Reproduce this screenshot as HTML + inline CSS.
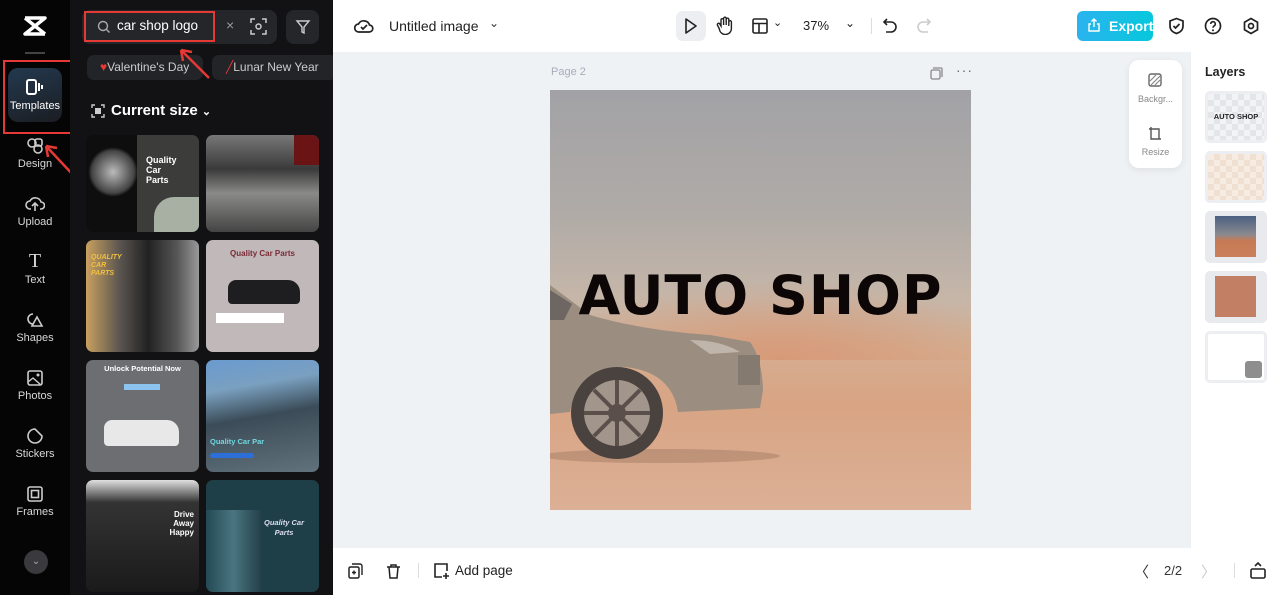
<!DOCTYPE html>
<html><head><meta charset="utf-8"><style>
*{margin:0;padding:0;box-sizing:border-box}
body{width:1280px;height:595px;overflow:hidden;font-family:"Liberation Sans",sans-serif;background:#fff;position:relative}
.abs{position:absolute}
.nav{left:0;top:0;width:70px;height:595px;background:#050505}
.navi{position:absolute;left:0;width:70px;text-align:center;color:#d8d8d8;font-size:11px}
.panel{left:70px;top:0;width:263px;height:595px;background:#121214;overflow:hidden}
.th{position:absolute;width:113px;border-radius:7px;overflow:hidden}
.canvasbg{left:333px;top:52px;width:857px;height:496px;background:#eff2f5}
.icon{position:absolute}
</style></head><body>
<div class="abs nav">
  <svg class="icon" style="left:22px;top:14px" width="26" height="24" viewBox="0 0 26 24"><path d="M3 4h20L3 20h20M3 4l20 16" stroke="#fff" stroke-width="3.5" fill="none" stroke-linejoin="round"/></svg>
  <div class="abs" style="left:25px;top:52px;width:20px;height:2px;background:#444"></div>
  <div class="abs" style="left:3px;top:60px;width:73px;height:74px;border:2px solid #e53935"></div>
  <div class="abs" style="left:8px;top:68px;width:54px;height:54px;border-radius:10px;background:linear-gradient(160deg,#23394f,#1b1d22)"></div>
  <svg class="icon" style="left:25px;top:78px" width="20" height="18" viewBox="0 0 20 18"><rect x="2" y="2" width="9" height="14" rx="2" stroke="#fff" stroke-width="2" fill="none"/><path d="M14 5v8M17 7v4" stroke="#fff" stroke-width="2"/></svg>
  <div class="navi" style="top:100px;color:#fff;font-size:11px">Templates</div>
  <svg class="icon" style="left:26px;top:137px" width="18" height="18" viewBox="0 0 18 18"><circle cx="6" cy="6" r="4" stroke="#ccc" stroke-width="1.6" fill="none"/><circle cx="12" cy="12" r="4" stroke="#ccc" stroke-width="1.6" fill="none"/><rect x="9" y="2" width="7" height="7" rx="2" stroke="#ccc" stroke-width="1.6" fill="none"/></svg>
  <div class="navi" style="top:158px">Design</div>
  <svg class="icon" style="left:25px;top:195px" width="20" height="18" viewBox="0 0 20 18"><path d="M6 14H5a4 4 0 010-8 6 6 0 0111 1 3.5 3.5 0 010 7h-1M10 16V8M7 11l3-3 3 3" stroke="#ccc" stroke-width="1.6" fill="none"/></svg>
  <div class="navi" style="top:216px">Upload</div>
  <div class="navi" style="top:250px;font-size:20px;font-family:'Liberation Serif',serif">T</div>
  <div class="navi" style="top:274px">Text</div>
  <svg class="icon" style="left:26px;top:311px" width="18" height="18" viewBox="0 0 18 18"><path d="M7 3a5 5 0 100 10M11 6l5 9H6z" stroke="#ccc" stroke-width="1.6" fill="none"/></svg>
  <div class="navi" style="top:332px">Shapes</div>
  <svg class="icon" style="left:27px;top:370px" width="16" height="16" viewBox="0 0 16 16"><rect x="1" y="1" width="14" height="14" rx="2" stroke="#ccc" stroke-width="1.6" fill="none"/><path d="M1 12l5-4 8 7" stroke="#ccc" stroke-width="1.4" fill="none"/><circle cx="11" cy="5" r="1.5" fill="#ccc"/></svg>
  <div class="navi" style="top:390px">Photos</div>
  <svg class="icon" style="left:26px;top:427px" width="18" height="18" viewBox="0 0 18 18"><path d="M9 2a7 7 0 107 7l-7-7z" stroke="#ccc" stroke-width="1.6" fill="none"/></svg>
  <div class="navi" style="top:448px">Stickers</div>
  <svg class="icon" style="left:27px;top:486px" width="16" height="16" viewBox="0 0 16 16"><rect x="1" y="1" width="14" height="14" rx="2" stroke="#ccc" stroke-width="1.6" fill="none"/><rect x="4.5" y="4.5" width="7" height="7" stroke="#ccc" stroke-width="1.6" fill="none"/></svg>
  <div class="navi" style="top:506px">Frames</div>
  <div class="abs" style="left:24px;top:550px;width:24px;height:24px;border-radius:12px;background:#3a3a3e;color:#aaa;font-size:10px;text-align:center;line-height:24px">⌄</div>
</div>
<svg class="abs" style="left:40px;top:140px" width="40" height="42" viewBox="0 0 40 42"><path d="M36 38L6 6M6 6l2 11M6 6l11 2" stroke="#e53935" stroke-width="2.5" fill="none"/></svg>
<div class="abs panel">
  <div class="abs" style="left:12px;top:10px;width:195px;height:34px;border-radius:8px;background:#25262a"></div>
  <div class="abs" style="left:14px;top:11px;width:131px;height:31px;border:2px solid #e53935"></div>
  <svg class="icon" style="left:27px;top:20px" width="14" height="14" viewBox="0 0 14 14"><circle cx="6" cy="6" r="4.5" stroke="#aaa" stroke-width="1.4" fill="none"/><path d="M9.5 9.5l3 3" stroke="#aaa" stroke-width="1.4"/></svg>
  <div class="abs" style="left:47px;top:18px;color:#fff;font-size:13.5px">car shop logo</div>
  <div class="abs" style="left:156px;top:17px;color:#999;font-size:14px">×</div>
  <svg class="icon" style="left:180px;top:18px" width="17" height="17" viewBox="0 0 17 17"><path d="M1 5V1h4M12 1h4v4M16 12v4h-4M5 16H1v-4" stroke="#ccc" stroke-width="1.5" fill="none"/><circle cx="8.5" cy="8.5" r="2.5" stroke="#ccc" stroke-width="1.5" fill="none"/></svg>
  <div class="abs" style="left:216px;top:10px;width:33px;height:34px;border-radius:8px;background:#25262a"></div>
  <svg class="icon" style="left:225px;top:19px" width="16" height="16" viewBox="0 0 16 16"><path d="M2 2h12l-5 6v6l-2-1V8z" stroke="#ccc" stroke-width="1.4" fill="none"/></svg>
  <div class="abs" style="left:17px;top:55px;width:116px;height:25px;border-radius:7px;background:#232428;color:#ccc;font-size:12px;line-height:25px;padding-left:13px"><span style="color:#e53935">♥</span>Valentine's Day</div>
  <div class="abs" style="left:142px;top:55px;width:125px;height:25px;border-radius:7px;background:#232428;color:#ccc;font-size:12px;line-height:25px;padding-left:14px;white-space:nowrap;overflow:hidden"><span style="color:#e53935">╱</span>Lunar New Year</div>
  <svg class="abs" style="left:103px;top:44px" width="40" height="38" viewBox="0 0 40 38"><path d="M36 34L8 6M8 6l2 11M8 6l11 2" stroke="#e53935" stroke-width="2.5" fill="none"/></svg>
  <svg class="icon" style="left:21px;top:104px" width="14" height="14" viewBox="0 0 14 14"><path d="M1 4V1h3M10 1h3v3M13 10v3h-3M4 13H1v-3" stroke="#ccc" stroke-width="1.4" fill="none"/><rect x="4" y="4" width="6" height="6" fill="#ccc"/></svg>
  <div class="abs" style="left:41px;top:102px;color:#fff;font-size:15px;font-weight:bold">Current size <span style="font-size:11px">⌄</span></div>
  <div class="th" style="left:16px;top:135px;height:97px;background:linear-gradient(90deg,#0e0e0e 45%,#3c3d3a 45%)">
    <div class="abs" style="left:2px;top:12px;width:50px;height:50px;background:radial-gradient(#bbb,#444 60%,transparent 70%)"></div>
    <div class="abs" style="left:60px;top:20px;color:#fff;font-size:9px;font-weight:bold;line-height:10px">Quality<br>Car<br>Parts</div>
    <div class="abs" style="left:68px;top:62px;width:50px;height:40px;border-radius:20px 0 0 0;background:#a8b0a4"></div>
  </div>
  <div class="th" style="left:136px;top:135px;height:97px;background:linear-gradient(180deg,#777 0%,#3a3a3a 35%,#8a8a88 60%,#444 100%)">
    <div class="abs" style="right:0;top:0;width:25px;height:30px;background:#6a1416"></div>
  </div>
  <div class="th" style="left:16px;top:240px;height:112px;background:linear-gradient(90deg,#c9a060 0%,#5a5550 30%,#222 55%,#555 80%,#999)">
    <div class="abs" style="left:5px;top:14px;color:#f0c040;font-size:7px;font-weight:bold;font-style:italic;line-height:8px">QUALITY<br>CAR<br>PARTS</div>
  </div>
  <div class="th" style="left:136px;top:240px;height:112px;background:#c1b8ba">
    <div class="abs" style="left:0;width:113px;top:9px;text-align:center;color:#7a2a35;font-size:8px;font-weight:bold">Quality Car Parts</div>
    <div class="abs" style="left:22px;top:40px;width:72px;height:24px;border-radius:8px 12px 4px 4px;background:#1e1e20"></div>
    <div class="abs" style="left:10px;top:73px;width:68px;height:10px;background:#fff"></div>
  </div>
  <div class="th" style="left:16px;top:360px;height:112px;background:#6c6e72">
    <div class="abs" style="left:0;width:113px;top:4px;text-align:center;color:#fff;font-size:7.5px;font-weight:bold">Unlock Potential Now</div>
    <div class="abs" style="left:38px;top:24px;width:36px;height:6px;background:#8cc4f0"></div>
    <div class="abs" style="left:18px;top:60px;width:75px;height:26px;border-radius:8px 12px 4px 4px;background:#e8e8e8"></div>
  </div>
  <div class="th" style="left:136px;top:360px;height:112px;background:linear-gradient(170deg,#6a9ad0 0%,#7aa0c0 25%,#3b4c58 50%,#62727c 100%)">
    <div class="abs" style="left:4px;top:77px;color:#70d8e0;font-size:7.5px;font-weight:bold">Quality Car Par</div>
    <div class="abs" style="left:4px;top:93px;width:44px;height:5px;background:#2d6fd8;border-radius:3px"></div>
  </div>
  <div class="th" style="left:16px;top:480px;height:112px;background:linear-gradient(180deg,#e0e0e0 0%,#333 20%,#1a1a1a 100%)">
    <div class="abs" style="right:5px;top:30px;color:#fff;font-size:8px;font-weight:bold;text-align:right;line-height:9px">Drive<br>Away<br>Happy</div>
  </div>
  <div class="th" style="left:136px;top:480px;height:112px;background:#1f3f48">
    <div class="abs" style="left:0;top:30px;width:55px;height:82px;background:linear-gradient(90deg,#234a55,#4a7580,#23404a)"></div>
    <div class="abs" style="left:58px;top:38px;color:#dde;font-size:7.5px;font-weight:bold;font-style:italic;text-align:center;line-height:10px">Quality Car<br>Parts</div>
  </div>
</div>
<div class="abs" style="left:333px;top:273px;width:7px;height:48px;background:#222;border-radius:0 6px 6px 0"></div>
<svg class="icon" style="left:354px;top:17px" width="20" height="18" viewBox="0 0 20 18"><path d="M5 15a4 4 0 01-.5-8 6 6 0 0111 1 3.5 3.5 0 01-.5 7z" stroke="#222" stroke-width="1.7" fill="none"/><path d="M7 10l2 2 4-4" stroke="#222" stroke-width="1.7" fill="none"/></svg>
<div class="abs" style="left:389px;top:18px;font-size:14px;color:#222">Untitled image</div>
<div class="abs" style="left:489px;top:16px;font-size:12px;color:#333">⌄</div>
<div class="abs" style="left:676px;top:11px;width:30px;height:30px;border-radius:7px;background:#eceef1"></div>
<svg class="icon" style="left:684px;top:18px" width="14" height="16" viewBox="0 0 14 16"><path d="M2 1l10 7-10 7z" stroke="#222" stroke-width="1.6" fill="none" stroke-linejoin="round"/></svg>
<svg class="icon" style="left:716px;top:16px" width="18" height="19" viewBox="0 0 18 19"><path d="M5 10V4a1.3 1.3 0 012.6 0v5V2.5a1.3 1.3 0 012.6 0V9V3.5a1.3 1.3 0 012.6 0V10V6a1.3 1.3 0 012.6 0v6a6 6 0 01-12 1l-2-4a1.3 1.3 0 012.2-1.3z" stroke="#222" stroke-width="1.4" fill="none"/></svg>
<svg class="icon" style="left:752px;top:18px" width="16" height="16" viewBox="0 0 16 16"><rect x="1" y="1" width="14" height="14" rx="1.5" stroke="#222" stroke-width="1.6" fill="none"/><path d="M1 5.5h14M7 5.5V15" stroke="#222" stroke-width="1.6"/></svg>
<div class="abs" style="left:773px;top:16px;font-size:11px;color:#222">⌄</div>
<div class="abs" style="left:803px;top:18px;font-size:13px;color:#222">37%</div>
<div class="abs" style="left:845px;top:16px;font-size:12px;color:#222">⌄</div>
<div class="abs" style="left:871px;top:18px;width:1px;height:16px;background:#ddd"></div>
<svg class="icon" style="left:882px;top:17px" width="16" height="17" viewBox="0 0 16 17"><path d="M5 2L2 5l3 3M2 5h7a5 5 0 010 10H4" stroke="#222" stroke-width="1.6" fill="none"/></svg>
<svg class="icon" style="left:916px;top:17px" width="16" height="17" viewBox="0 0 16 17"><path d="M11 2l3 3-3 3M14 5H7a5 5 0 000 10h5" stroke="#ccc" stroke-width="1.6" fill="none"/></svg>
<div class="abs" style="left:1077px;top:11px;width:76px;height:30px;border-radius:6px;background:linear-gradient(90deg,#2bb3ee,#06c8dc);color:#fff;font-size:14px;font-weight:bold;line-height:30px;padding-left:32px">Export</div>
<svg class="icon" style="left:1087px;top:18px" width="14" height="14" viewBox="0 0 14 14"><path d="M4 6H2v7h10V6h-2M7 9V1M4.5 3.5L7 1l2.5 2.5" stroke="#fff" stroke-width="1.4" fill="none"/></svg>
<svg class="icon" style="left:1168px;top:17px" width="17" height="18" viewBox="0 0 17 18"><path d="M8.5 1.5L15 4v5c0 4-3 6.5-6.5 7.5C5 15.5 2 13 2 9V4z" stroke="#222" stroke-width="1.7" fill="none"/><path d="M5.5 9l2 2 4-4" stroke="#222" stroke-width="1.7" fill="none"/></svg>
<svg class="icon" style="left:1204px;top:17px" width="18" height="18" viewBox="0 0 18 18"><circle cx="9" cy="9" r="7.5" stroke="#222" stroke-width="1.7" fill="none"/><path d="M6.7 7a2.3 2.3 0 114 1.5c-1 .7-1.7 1.1-1.7 2.2" stroke="#222" stroke-width="1.6" fill="none"/><circle cx="9" cy="13.2" r="1" fill="#222"/></svg>
<svg class="icon" style="left:1242px;top:17px" width="18" height="18" viewBox="0 0 18 18"><path d="M9 1.5l6.5 3.75v7.5L9 16.5l-6.5-3.75v-7.5z" stroke="#222" stroke-width="1.7" fill="none"/><circle cx="9" cy="9" r="2.5" stroke="#222" stroke-width="1.7" fill="none"/></svg>
<div class="abs canvasbg"></div>
<div class="abs" style="left:551px;top:66px;font-size:11px;color:#aab">Page 2</div>
<svg class="icon" style="left:930px;top:67px" width="13" height="13" viewBox="0 0 13 13"><rect x="1" y="3" width="9" height="9" rx="1.5" stroke="#888" stroke-width="1.3" fill="none"/><path d="M3 1h8a1 1 0 011 1v8" stroke="#888" stroke-width="1.3" fill="none"/></svg>
<div class="abs" style="left:956px;top:62px;font-size:14px;color:#666;letter-spacing:1px">···</div>
<div class="abs" style="left:550px;top:90px;width:421px;height:420px;overflow:hidden;background:linear-gradient(180deg,#a2a2a6 0%,#b0aba7 30%,#c6b6a8 50%,#d5ad90 62%,#d8a484 75%,#dcb096 100%)">
  <div class="abs" style="left:0;top:190px;width:421px;height:80px;background:radial-gradient(ellipse at 55% 100%,#d79a78 0%,rgba(215,154,120,0) 70%)"></div>
  <svg class="abs" style="left:0;top:0" width="421" height="420" viewBox="0 0 421 420">
    <ellipse cx="110" cy="366" rx="120" ry="7" fill="#a88068" opacity=".55"/>
    <path d="M0 195 L40 225 Q90 240 160 245 L200 252 Q212 268 213 300 L210 318 L128 322 Q122 282 75 277 Q28 280 20 322 L0 324 Z" fill="#9b8d80"/>
    <path d="M0 200 L22 214 L14 230 L0 230Z" fill="#6d6662"/>
    <path d="M140 250 Q170 250 190 262 L160 264Z" fill="#c0b5aa"/>
    <rect x="188" y="265" width="22" height="30" fill="#857a70"/>
    <circle cx="67" cy="323" r="46" fill="#4a423e"/>
    <circle cx="67" cy="323" r="33" fill="#a2968c"/>
    <circle cx="67" cy="323" r="9" fill="#5a4f4a"/>
    <path d="M67 290V356M34 323H100M44 300L90 346M90 300L44 346" stroke="#5a4f4a" stroke-width="4"/>
  </svg>
  <div class="abs" style="left:0;width:421px;top:174px;text-align:center;font-family:'DejaVu Sans','Liberation Sans',sans-serif;font-weight:bold;font-size:54px;color:#0c0606;letter-spacing:1px">AUTO SHOP</div>
</div>
<div class="abs" style="left:1129px;top:60px;width:53px;height:108px;border-radius:10px;background:#fff;box-shadow:0 2px 8px rgba(0,0,0,.08)"></div>
<svg class="icon" style="left:1148px;top:73px" width="14" height="14" viewBox="0 0 14 14"><rect x="1" y="1" width="12" height="12" rx="2" stroke="#666" stroke-width="1.4" fill="none"/><path d="M2 8l6-6M3 12l9-9M7 12l5-5" stroke="#888" stroke-width="1.2"/></svg>
<div class="abs" style="left:1129px;top:94px;width:53px;text-align:center;font-size:9px;color:#888">Backgr...</div>
<svg class="icon" style="left:1148px;top:126px" width="14" height="14" viewBox="0 0 14 14"><path d="M3 1v12h10M1 3h10v10" stroke="#555" stroke-width="1.4" fill="none"/></svg>
<div class="abs" style="left:1129px;top:147px;width:53px;text-align:center;font-size:9px;color:#888">Resize</div>
<div class="abs" style="left:1190px;top:52px;width:1px;height:496px;background:#eceef1"></div>
<div class="abs" style="left:1205px;top:65px;font-size:12.5px;font-weight:bold;color:#222">Layers</div>
<div class="abs" style="left:1205px;top:91px;width:62px;height:52px;border-radius:5px;background:repeating-conic-gradient(#e3e5e8 0 25%,#f2f3f5 0 50%) 0 0/12px 12px;border:3px solid #eceef1;font-size:7.5px;font-weight:bold;text-align:center;line-height:46px;color:#222">AUTO SHOP</div>
<div class="abs" style="left:1205px;top:151px;width:62px;height:52px;border-radius:5px;background:repeating-conic-gradient(#efe0d2 0 25%,#f7ece2 0 50%) 0 0/12px 12px;border:3px solid #eceef1"></div>
<div class="abs" style="left:1205px;top:211px;width:62px;height:52px;border-radius:5px;background:#e8eaed;"><div class="abs" style="left:10px;top:5px;width:41px;height:41px;background:linear-gradient(180deg,#4a6080 0%,#8a8a90 45%,#c77a55 60%,#c9805a 100%)"></div></div>
<div class="abs" style="left:1205px;top:271px;width:62px;height:52px;border-radius:5px;background:#e8eaed"><div class="abs" style="left:10px;top:5px;width:41px;height:41px;background:#c27f63"></div></div>
<div class="abs" style="left:1205px;top:331px;width:62px;height:52px;border-radius:5px;background:#fff;border:3px solid #eceef1"><div class="abs" style="right:2px;bottom:2px;width:17px;height:17px;border-radius:3px;background:#8e8e8e"></div></div>
<svg class="icon" style="left:348px;top:563px" width="15" height="16" viewBox="0 0 15 16"><rect x="1" y="4" width="10" height="11" rx="1.5" stroke="#222" stroke-width="1.5" fill="none"/><path d="M4 1h8a2 2 0 012 2v9M6 7.5v4M4 9.5h4" stroke="#222" stroke-width="1.4" fill="none"/></svg>
<svg class="icon" style="left:386px;top:563px" width="15" height="16" viewBox="0 0 15 16"><path d="M1 4h13M5 4V2h5v2M3 4l1 11h7l1-11" stroke="#222" stroke-width="1.5" fill="none"/></svg>
<div class="abs" style="left:418px;top:563px;width:1px;height:15px;background:#ddd"></div>
<svg class="icon" style="left:433px;top:562px" width="17" height="18" viewBox="0 0 17 18"><path d="M9 15H2V2h12v7M13 11v6M10 14h6" stroke="#222" stroke-width="1.6" fill="none"/></svg>
<div class="abs" style="left:455px;top:563px;font-size:13.5px;color:#222">Add page</div>
<div class="abs" style="left:1134px;top:561px;font-size:15px;color:#333">〈</div>
<div class="abs" style="left:1164px;top:563px;font-size:13px;color:#333">2/2</div>
<div class="abs" style="left:1201px;top:561px;font-size:15px;color:#ccc">〉</div>
<div class="abs" style="left:1234px;top:563px;width:1px;height:15px;background:#ddd"></div>
<svg class="icon" style="left:1250px;top:561px" width="16" height="18" viewBox="0 0 16 18"><rect x="1" y="8" width="14" height="9" rx="1.5" stroke="#222" stroke-width="1.6" fill="none"/><path d="M5 5l3-3 3 3" stroke="#222" stroke-width="1.6" fill="none"/></svg>
</body></html>
